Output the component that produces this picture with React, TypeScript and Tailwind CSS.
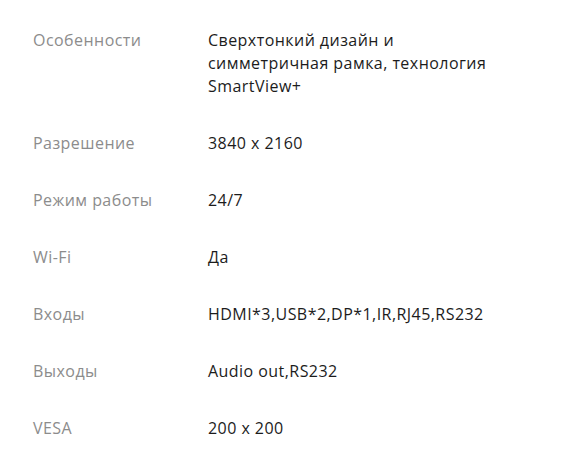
import React from "react";

type Spec = { label: string; value: string };

const specs: Spec[] = [
  { label: "Особенности", value: "Сверхтонкий дизайн и симметричная рамка, технология SmartView+" },
  { label: "Разрешение", value: "3840 x 2160" },
  { label: "Режим работы", value: "24/7" },
  { label: "Wi-Fi", value: "Да" },
  { label: "Входы", value: "HDMI*3,USB*2,DP*1,IR,RJ45,RS232" },
  { label: "Выходы", value: "Audio out,RS232" },
  { label: "VESA", value: "200 x 200" },
];

export default function App() {
  return (
    <div className="min-h-screen bg-white pl-[33px] pt-[12px] font-['Open_Sans',sans-serif] text-[16px] leading-[23px] tracking-[0.45px]">
      {specs.map((s) => (
        <div key={s.label} className="flex py-[17px]">
          <p className="w-[175px] shrink-0 text-[#8c8c8c]">{s.label}</p>
          <p className="w-[300px] text-[#1c1c1c]">{s.value}</p>
        </div>
      ))}
    </div>
  );
}
